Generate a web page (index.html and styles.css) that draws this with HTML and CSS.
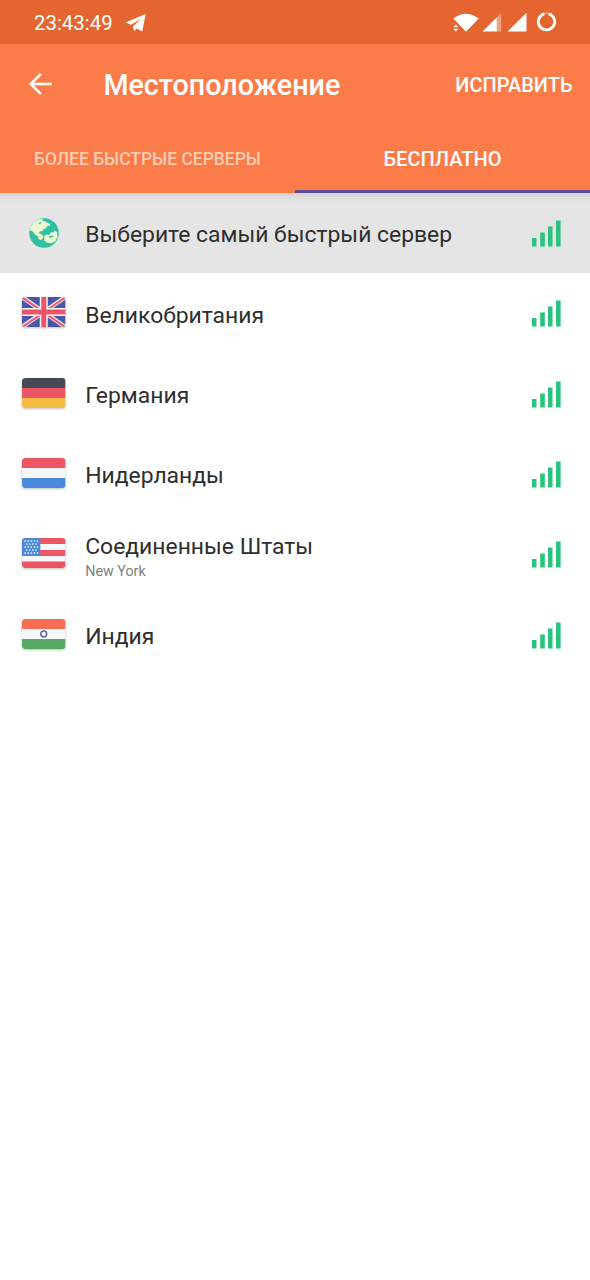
FILE: index.html
```html
<!DOCTYPE html>
<html lang="ru">
<head>
<meta charset="utf-8">
<title>Местоположение</title>
<link rel="stylesheet" href="styles.css">
</head>
<body>
<svg class="defs" width="0" height="0">
  <defs>
    <clipPath id="flag-shape"><rect width="43.5" height="30" rx="3"/></clipPath>
    <symbol id="signal" viewBox="0 0 29 27">
      <path fill="#28c37c" d="M0 18h4.5v8.5H0zM8.2 12.5h4.6v14H8.2zM16 6.5h4.5v20H16zM24 .5h4.6v26H24z"/>
    </symbol>
  </defs>
</svg>
<div class="status">
  <span class="clock">23:43:49</span>
  <svg class="telegram" width="22" height="20" viewBox="0 0 22 20"><path fill="#fff" d="M.5 9.6 20.7 1.1 17.2 18.6 11.8 15.4 9 18 8 13.4 16 5.8 6.1 11.8z"/></svg>
  <svg class="indicators" width="106" height="24" viewBox="0 0 106 24">
    <path fill="#fff" d="M.3 6.5Q13-3.2 25.7 6.5L13 19.7 7 13.5 5.2 11.6z"/>
    <path fill="#fff" d="m2.8 12.5 2.5 2.8h-5zM.3 16.7h5l-2.5 2.8z"/>
    <path fill="#fff" d="M29.5 19.5 43.8 5.3v14.2z"/>
    <path fill="#fff" fill-opacity=".4" d="m43.8 5.3 4.4-4.3v18.5h-4.4z"/>
    <path fill="#fff" d="M54.6 19.5 73.5.7v18.8z"/>
    <path fill="none" stroke="#fff" stroke-width="2.8" d="M91.4 1.8a8.2 8.2 0 1 0 4.2 0"/>
    <path fill="none" stroke="#fff" stroke-width="1.4" stroke-opacity=".5" d="M91.4 1.4a8.2 8.2 0 0 1 4.2 0"/>
  </svg>
</div>
<header class="header">
  <div class="toolbar">
    <svg class="back" width="24" height="24" viewBox="0 0 24 24"><path fill="none" stroke="#fff" stroke-width="2.6" d="M23.8 12H3M13 1.8 2.7 12 13 22.2"/></svg>
    <h1 class="title">Местоположение</h1>
    <span class="action">ИСПРАВИТЬ</span>
  </div>
  <nav class="tabs">
    <div class="tab"><span class="tab-fast">БОЛЕЕ БЫСТРЫЕ СЕРВЕРЫ</span></div>
    <div class="tab active"><span class="tab-free">БЕСПЛАТНО</span></div>
  </nav>
</header>
<main class="list">
  <div class="row selected">
    <div class="icon"><svg class="globe" width="30" height="30" viewBox="0 0 30 30">
      <circle cx="15" cy="15" r="14.7" fill="#31bfa5"/>
      <path fill="#e9f8cd" d="M.5 12.6C1.8 6.8 6 2.3 11.6.8L14 1.2 13.6 3l2.6.2L18.4 5l2.5.4.3 2.2-3.1.5-1 2.2-2.3.4-1.2 2.3-2.7.6-1.3 2 2.8.5 2 2.2-.6 2.5-2 1.3-2.3-1.2-.6-2.7-3.2-1.6-1.5-2.7-2.2-1.4z"/>
      <path fill="#e9f8cd" d="m15.3 18 2.2-1.4 2.6.3 1.6-2.4 3-.3 1-1.6 2.4 1.4.3 5.3-2 4-4.3 2-3.9-.5-3-2.3z"/>
      <path fill="#31bfa5" d="m9.8 4.8 2.3-.8-.4 1.7-1.6.5zM20 18.2l3.2-.6 1.6 1-2.2.9-2.3.3z"/>
    </svg></div>
    <div class="label"><span class="name name-fastest">Выберите самый быстрый сервер</span></div>
    <svg class="signal"><use href="#signal"/></svg>
  </div>
  <div class="row">
    <div class="icon"><svg class="flag" width="43.5" height="30" viewBox="0 0 43.5 30"><g clip-path="url(#flag-shape)">
      <path fill="#4758a9" d="M0 0h43.5v30H0z"/>
      <path stroke="#e9dcea" stroke-width="4.4" d="m0 0 43.5 30M43.5 0 0 30"/>
      <path stroke="#ed5565" stroke-width="1.9" d="m0 .3 43.5 30M43.5.3 0 30.3"/>
      <path stroke="#f5f7fa" stroke-width="8" d="M21.75 0v30M0 15h43.5"/>
      <path stroke="#ed5565" stroke-width="5" d="M21.75 0v30M0 15h43.5"/>
    </g></svg></div>
    <div class="label"><span class="name">Великобритания</span></div>
    <svg class="signal"><use href="#signal"/></svg>
  </div>
  <div class="row">
    <div class="icon"><svg class="flag" width="43.5" height="30" viewBox="0 0 43.5 30"><g clip-path="url(#flag-shape)">
      <path fill="#434a54" d="M0 0h43.5v10H0z"/><path fill="#ed5565" d="M0 10h43.5v10H0z"/><path fill="#f6bb42" d="M0 20h43.5v10H0z"/>
    </g></svg></div>
    <div class="label"><span class="name">Германия</span></div>
    <svg class="signal"><use href="#signal"/></svg>
  </div>
  <div class="row">
    <div class="icon"><svg class="flag" width="43.5" height="30" viewBox="0 0 43.5 30"><g clip-path="url(#flag-shape)">
      <path fill="#ed5565" d="M0 0h43.5v10H0z"/><path fill="#f5f7fa" d="M0 10h43.5v10H0z"/><path fill="#4a89dc" d="M0 20h43.5v10H0z"/>
    </g></svg></div>
    <div class="label"><span class="name">Нидерланды</span></div>
    <svg class="signal"><use href="#signal"/></svg>
  </div>
  <div class="row">
    <div class="icon"><svg class="flag" width="43.5" height="30" viewBox="0 0 43.5 30"><g clip-path="url(#flag-shape)">
      <path fill="#f5f7fa" d="M0 0h43.5v30H0z"/>
      <path fill="#ed5565" d="M0 0h43.5v6H0zM0 12h43.5v6H0zM0 23.5h43.5V30H0z"/>
      <path fill="#4a89dc" d="M0 0h18.3v17.8H0z"/>
      <path fill="none" stroke="#f5f7fa" stroke-width="1.7" stroke-linecap="round" stroke-dasharray=".1 3" d="M3 3h14M4.5 6h12M3 9h14M4.5 12h12M3 15h14"/>
    </g></svg></div>
    <div class="label"><span class="name">Соединенные Штаты</span><span class="city">New York</span></div>
    <svg class="signal"><use href="#signal"/></svg>
  </div>
  <div class="row">
    <div class="icon"><svg class="flag" width="43.5" height="30" viewBox="0 0 43.5 30"><g clip-path="url(#flag-shape)">
      <path fill="#fc6e51" d="M0 0h43.5v10H0z"/><path fill="#f5f7fa" d="M0 10h43.5v10H0z"/><path fill="#56a862" d="M0 20h43.5v10H0z"/>
      <circle cx="21.75" cy="15" r="2.9" fill="none" stroke="#5967aa" stroke-width="1.5"/>
    </g></svg></div>
    <div class="label"><span class="name">Индия</span></div>
    <svg class="signal"><use href="#signal"/></svg>
  </div>
</main>
</body>
</html>
```
FILE: styles.css
```css
* { box-sizing: border-box; }
body { margin: 0; background: #fff; font-family: Roboto, "Liberation Sans", sans-serif; color: #2e2e2e; }
svg { display: block; flex: none; }
.defs { position: absolute; }
.status { display: flex; align-items: center; height: 44px; padding: 0 31px 0 34px; background: #e46530; color: #fff; }
.clock { font-size: 20.4px; line-height: 24px; width: 90px; padding-top: 1px; white-space: nowrap; }
.telegram { margin: 1px 0 0 0.5px; }
.indicators { margin-left: auto; margin-top: 4px; }
.header { height: 149px; background: #fb7c49; color: #fff; }
.toolbar { display: flex; align-items: center; height: 80px; padding: 0 17.5px 0 28px; }
.title { margin: 2px 0 0 51.4px; font-size: 28.7px; font-weight: 500; line-height: 36px; white-space: nowrap; }
.action { margin: 0 0 0 auto; font-size: 20px; font-weight: 500; line-height: 24px; padding-top: 1px; }
.tabs { display: flex; height: 69px; }
.tab { display: flex; flex: 1; align-items: center; justify-content: center; padding-top: 3px; border-bottom: 3px solid transparent; font-weight: 500; white-space: nowrap; color: #fdccb5; }
.active { border-bottom-color: #5b4c97; color: #fff; }
.tab-fast { font-size: 17.45px; }
.tab-free { font-size: 20.1px; }
.row { display: flex; height: 80.4px; padding: 0 28px 0 22px; }
.selected { background: linear-gradient(#d3d4d5, #e0e0e0 5px, #e5e5e5 12px); }
.icon { width: 63.2px; padding-top: 23.9px; }
.flag { border-radius: 3px; filter: drop-shadow(0 1px 1px rgba(0, 0, 0, .25)); }
.globe { margin: 1.5px 0 0 6.8px; }
.label { display: flex; flex: 1; flex-direction: column; justify-content: center; padding-top: 3px; white-space: nowrap; }
.name { font-size: 22.9px; line-height: 27px; }
.city { font-size: 14.3px; line-height: 17px; margin-top: 3px; color: #808080; }
.signal { width: 29px; height: 27px; margin: 26.9px 1.2px 0 0; }
```
